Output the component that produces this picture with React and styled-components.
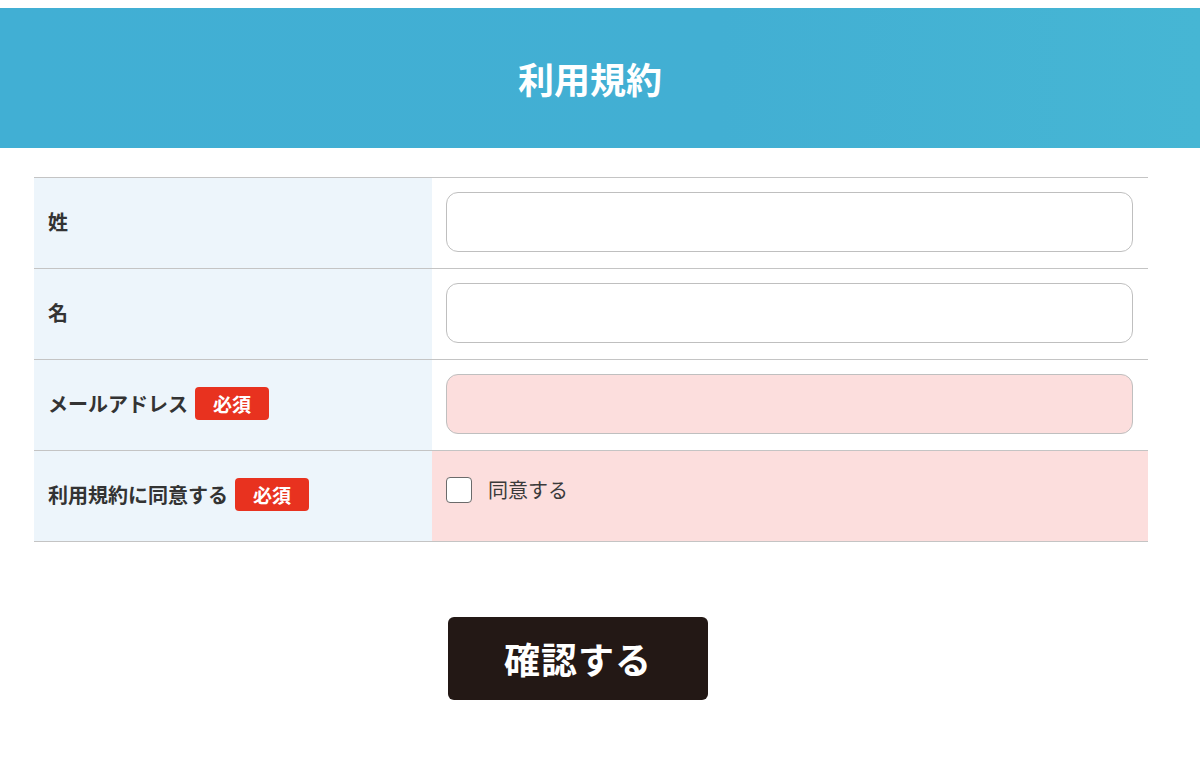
import React, { useState } from 'react';
import styled, { createGlobalStyle } from 'styled-components';

const GlobalStyle = createGlobalStyle`
    * {
        box-sizing: border-box;
    }
    body {
        margin: 0;
        padding-top: 8px;
        background: #fff;
        font-family: "Noto Sans CJK JP", "Noto Sans", sans-serif;
        color: #333;
    }
`;

const Header = styled.header`
    height: 140px;
    background: linear-gradient(90deg, #41afd4 0%, #42afd3 60%, #46b6d4 100%);
    display: flex;
    align-items: center;
`;

const Title = styled.h1`
    width: 1180px;
    margin: 0;
    text-align: center;
    color: #fff;
    font-size: 36px;
    font-weight: 700;
`;

const Form = styled.form`
    width: 1114px;
    margin: 29px 0 0 34px;
`;

const Table = styled.div`
    border-top: 1px solid #c4c4c4;
`;

const Row = styled.div`
    display: grid;
    grid-template-columns: 398px 1fr;
    border-bottom: 1px solid #c4c4c4;
`;

const Label = styled.div`
    min-height: 90px;
    background: #edf5fb;
    display: flex;
    align-items: center;
    padding: 0 14px 3px;
    font-size: 20px;
    font-weight: 700;
    color: #333;
`;

const Required = styled.span`
    display: inline-flex;
    align-items: center;
    justify-content: center;
    width: 74px;
    height: 33px;
    margin-left: 7px;
    border-radius: 4px;
    background: #e8321f;
    color: #fff;
    font-size: 19px;
    font-weight: 700;
`;

const Field = styled.div`
    padding: ${(p) => (p.$top ? '24px 15px 15px 14px' : '14px 15px 15px 14px')};
    background: ${(p) => (p.$error ? '#fcdedd' : '#fff')};
`;

const Input = styled.input`
    display: block;
    width: 100%;
    height: 60px;
    border: 1px solid #bfbfbf;
    border-radius: 12px;
    padding: 0 16px;
    font-size: 18px;
    font-family: inherit;
    background: ${(p) => (p.$error ? '#fcdedd' : '#fff')};
    outline: none;
`;

const CheckLabel = styled.label`
    display: flex;
    align-items: center;
    gap: 16px;
    font-size: 20px;
    color: #3a3a3a;
    cursor: pointer;
`;

const Box = styled.span`
    width: 26px;
    height: 26px;
    border: 1px solid #6b6b6b;
    border-radius: 4px;
    background: #fff;
    display: inline-block;
`;

const Actions = styled.div`
    display: flex;
    padding: 75px 0 0 414px;
`;

const Submit = styled.button`
    width: 260px;
    height: 83px;
    border: none;
    border-radius: 6px;
    background: #231815;
    color: #fff;
    font-family: inherit;
    font-size: 36px;
    font-weight: 700;
    letter-spacing: 1px;
    padding-bottom: 3px;
    cursor: pointer;
`;

const fields = [
    { key: 'last', label: '姓' },
    { key: 'first', label: '名' },
    { key: 'email', label: 'メールアドレス', required: true, error: true },
];

function App() {
    const [agreed, setAgreed] = useState(false);
    return (
        <>
            <GlobalStyle />
            <Header>
                <Title>利用規約</Title>
            </Header>
            <Form onSubmit={(e) => e.preventDefault()}>
                <Table>
                    {fields.map((f) => (
                        <Row key={f.key}>
                            <Label>
                                {f.label}
                                {f.required && <Required>必須</Required>}
                            </Label>
                            <Field>
                                <Input type="text" $error={f.error} />
                            </Field>
                        </Row>
                    ))}
                    <Row>
                        <Label>
                            利用規約に同意する<Required>必須</Required>
                        </Label>
                        <Field $top $error={!agreed}>
                            <CheckLabel onClick={() => setAgreed(!agreed)}>
                                <Box />
                                同意する
                            </CheckLabel>
                        </Field>
                    </Row>
                </Table>
                <Actions>
                    <Submit type="submit">確認する</Submit>
                </Actions>
            </Form>
        </>
    );
}

export default App;
